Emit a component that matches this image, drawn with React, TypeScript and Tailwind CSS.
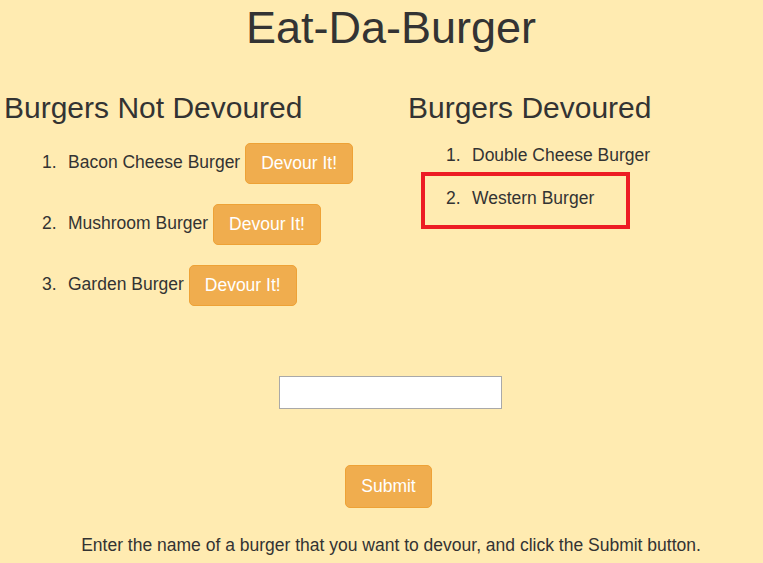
const notDevoured = ['Bacon Cheese Burger', 'Mushroom Burger', 'Garden Burger']
const devoured = ['Double Cheese Burger', 'Western Burger']

function DevourButton({ label }: { label: string }) {
  return (
    <button
      type="button"
      className="h-[41px] px-[15px] bg-[#f0ad4e] border border-[#eea236] rounded-[5px] text-white text-[17.5px] leading-[25px]"
    >
      {label}
    </button>
  )
}

export default function App() {
  return (
    <div
      className="w-screen h-screen overflow-hidden bg-[#ffebb1] text-[#333333]"
      style={{ fontFamily: '"Liberation Sans", Arial, sans-serif' }}
    >
      <div className="w-[782px]">
        <h1 className="mt-[3px] text-center text-[45px] leading-[50px]">Eat-Da-Burger</h1>

        <div className="mt-[38px] grid grid-cols-[404px_1fr] pl-[4px]">
          {/* Left column */}
          <div>
            <h2 className="text-[30px] leading-[33px]">Burgers Not Devoured</h2>
            <ol className="mt-[19px] pl-[38px] flex flex-col gap-[20px] text-[17.5px] leading-[25px]">
              {notDevoured.map((name, i) => (
                <li key={name} className="flex items-center h-[41px]">
                  <span className="relative top-[-1px] w-[26px] shrink-0">{i + 1}.</span>
                  <span className="relative top-[-1px] mr-[5px]">{name}</span>
                  <DevourButton label="Devour It!" />
                </li>
              ))}
            </ol>
          </div>

          {/* Right column */}
          <div>
            <h2 className="text-[30px] leading-[33px]">Burgers Devoured</h2>
            <ol className="mt-[19px] pl-[38px] flex flex-col gap-[18px] text-[17.5px] leading-[25px]">
              {devoured.map((name, i) => (
                <li key={name} className="relative flex">
                  <span className="w-[26px] shrink-0">{i + 1}.</span>
                  <span>{name}</span>
                  {i === 1 && (
                    <span className="absolute left-[-25px] top-[-14px] w-[209px] h-[57px] border-4 border-[#ed1c24]" />
                  )}
                </li>
              ))}
            </ol>
          </div>
        </div>

        <div className="mt-[70px] flex justify-center pr-[2px]">
          <input
            type="text"
            className="w-[223px] h-[33px] bg-white border border-[#a9a9a9] outline-none px-1"
          />
        </div>

        <div className="mt-[56px] flex justify-center pr-[5px]">
          <button
            type="submit"
            className="h-[43px] px-[15px] bg-[#f0ad4e] border border-[#eea236] rounded-[5px] text-white text-[17.5px] leading-[25px]"
          >
            Submit
          </button>
        </div>

        <p className="mt-[25px] text-center text-[17.5px] leading-[25px]">
          Enter the name of a burger that you want to devour, and click the Submit button.
        </p>
      </div>
    </div>
  )
}
